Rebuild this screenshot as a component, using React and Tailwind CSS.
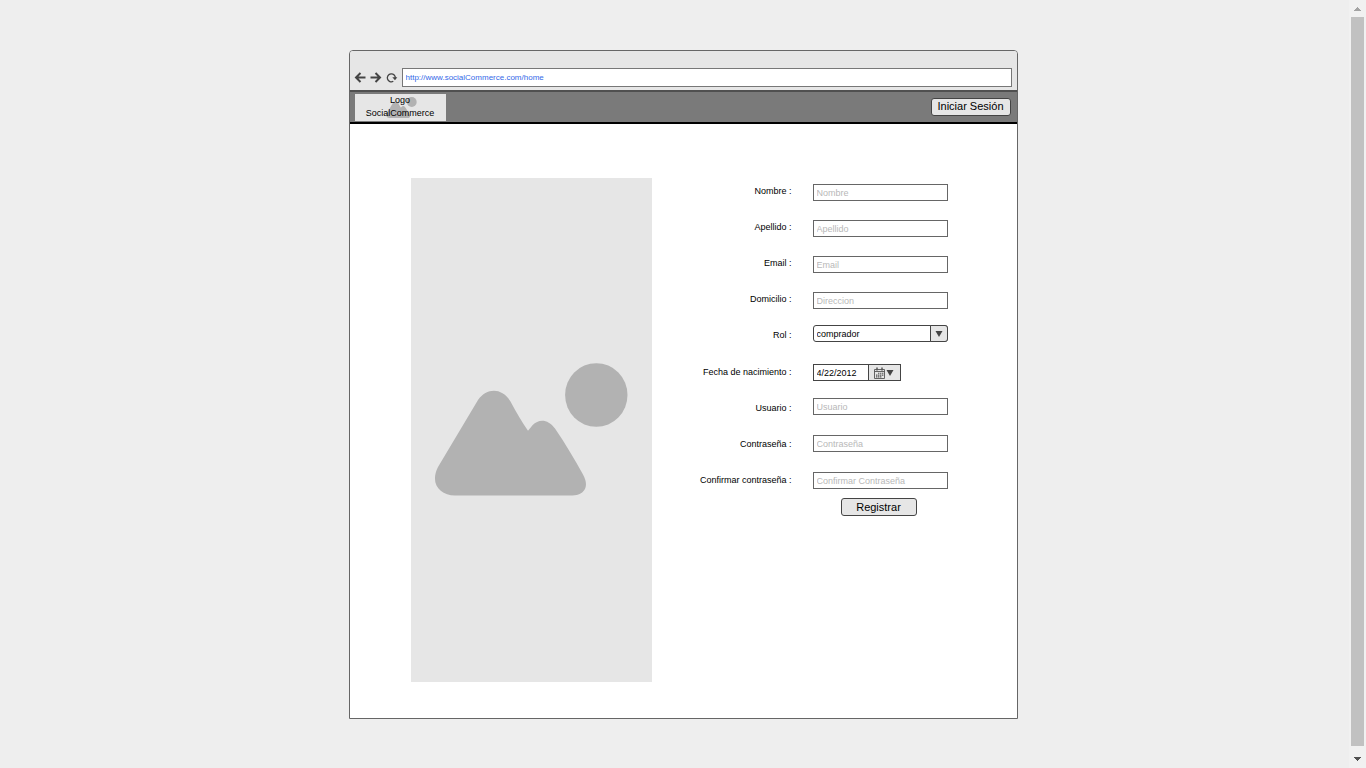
import React from "react";

const FIELDS_TOP = [
  { id: "nombre", placeholder: "Nombre" },
  { id: "apellido", placeholder: "Apellido" },
  { id: "email", placeholder: "Email" },
  { id: "domicilio", placeholder: "Direccion" },
];

const FIELDS_BOTTOM = [
  { id: "usuario", placeholder: "Usuario" },
  { id: "contrasena", placeholder: "Contraseña", type: "password" },
  { id: "confirmar", placeholder: "Confirmar Contraseña", type: "password" },
];

const LABELS_TOP = [
  ["nombre", "Nombre :"],
  ["apellido", "Apellido :"],
  ["email", "Email :"],
  ["domicilio", "Domicilio :"],
  ["rol", "Rol :"],
];

const LABELS_BOTTOM = [
  ["fecha", "Fecha de nacimiento :"],
  ["usuario", "Usuario :"],
  ["contrasena", "Contraseña :"],
  ["confirmar", "Confirmar contraseña :"],
];

function Landscape() {
  return (
    <g fill="#b2b2b2">
      <path d="M67 222C76 209.500 91 209.500 99.500 223.500C105 234 111 244 117 252.700L121.500 247.200C128 240.500 137 241 144 250.500C154 265 163 280.500 172 296.500C179 309 173 317.500 161 317.500H44C29 317 18.500 306 27 289Z" />
      <ellipse cx="185.300" cy="217" rx="31.200" ry="31.800" />
    </g>
  );
}

function TextField({ id, placeholder, type = "text" }) {
  return (
    <input
      id={id}
      type={type}
      placeholder={placeholder}
      className="block h-[17px] w-full border border-[#666] bg-white px-[3px] text-[9px] leading-3 text-black outline-none placeholder:text-[#b8b8b8]"
    />
  );
}

function LabelGroup({ labels }) {
  return (
    <div className="flex flex-col gap-6">
      {labels.map(([id, text]) => (
        <label key={id} htmlFor={id} className="whitespace-nowrap">
          {text}
        </label>
      ))}
    </div>
  );
}

function BrowserBar() {
  return (
    <div className="flex h-[39px] items-end gap-1 bg-[#e6e6e6] pr-[5px] pb-[3px] pl-1">
      <div className="flex h-[19px] items-center gap-1">
        <button type="button" aria-label="Atrás" className="h-3 w-3">
          <svg viewBox="0 0 12 12" className="h-3 w-3" fill="none" stroke="#444" strokeWidth="2">
            <path d="M11.500 5.500H2.500M6.500 1L2 5.500L6.500 10" />
          </svg>
        </button>
        <button type="button" aria-label="Adelante" className="h-3 w-3">
          <svg viewBox="0 0 12 12" className="h-3 w-3" fill="none" stroke="#444" strokeWidth="2">
            <path d="M0.500 5.500H9.500M5.500 1L10 5.500L5.500 10" />
          </svg>
        </button>
        <button type="button" aria-label="Recargar" className="h-3 w-3">
          <svg viewBox="0 0 12 12" className="h-3 w-3" fill="none" stroke="#444" strokeWidth="1.300">
            <path d="M7.300 9.300A4 4 0 1 1 9.300 6.300" />
            <path d="M6.300 5.300H11.300L9 8.300Z" fill="#444" stroke="none" />
          </svg>
        </button>
      </div>
      <input
        type="url"
        aria-label="Dirección"
        defaultValue="http://www.socialCommerce.com/home"
        className="h-[19px] min-w-0 flex-1 border border-[#777] bg-white px-[3px] text-[8px] leading-3 text-[#3369e8] outline-none"
      />
    </div>
  );
}

function SiteHeader() {
  return (
    <header className="flex h-[34px] items-start justify-between border-t-2 border-b-2 border-t-[#505050] border-b-black bg-[#7a7a7a] pt-[2px] pr-[6px] pl-[5px]">
      <a href="#home" className="relative flex h-[27px] w-[91px] flex-col items-center bg-[#e6e6e6] text-[9px] leading-[13px] text-black">
        <svg viewBox="24 185 193 133" className="absolute top-[3px] left-[31px] h-[21px] w-[31px]" aria-hidden="true">
          <Landscape />
        </svg>
        <span className="relative">Logo</span>
        <span className="relative">SocialCommerce</span>
      </a>
      <button type="button" className="mt-1 h-[18px] w-20 rounded-[3px] border border-[#444] bg-[#e6e6e6] pb-[2px] text-[11px] leading-[14px] text-black">
        Iniciar Sesión
      </button>
    </header>
  );
}

function RegisterForm() {
  return (
    <form className="flex gap-[21px] pt-[6px]" onSubmit={(e) => e.preventDefault()}>
      <div className="flex w-[101px] flex-col gap-[25px] pt-px text-right text-[9px] leading-3 text-black">
        <LabelGroup labels={LABELS_TOP} />
        <LabelGroup labels={LABELS_BOTTOM} />
      </div>
      <div className="flex w-[135px] flex-col">
        <div className="flex flex-col gap-[19px]">
          {FIELDS_TOP.map((f) => (
            <TextField key={f.id} {...f} />
          ))}
        </div>
        <div className="relative mt-4">
          <select
            id="rol"
            defaultValue="comprador"
            className="block h-[17px] w-full appearance-none rounded-[3px] border border-[#444] bg-white pr-5 pl-[3px] text-[9px] leading-3 text-black outline-none"
          >
            <option>comprador</option>
            <option>vendedor</option>
          </select>
          <span className="pointer-events-none absolute top-0 right-0 flex h-[17px] w-[18px] items-center justify-center rounded-r-[3px] border border-[#444] bg-[#e6e6e6]">
            <svg viewBox="0 0 8 6" className="h-[6px] w-2" fill="#444">
              <path d="M0.500 0H7.500L4 6Z" />
            </svg>
          </span>
        </div>
        <div className="mt-[22px] flex h-[17px] w-[88px] border border-[#444]">
          <input
            id="fecha"
            type="text"
            defaultValue="4/22/2012"
            className="w-[54px] bg-white px-[3px] text-[9px] leading-3 text-black outline-none"
          />
          <button type="button" aria-label="Abrir calendario" className="flex flex-1 items-center justify-center gap-px border-l border-[#444] bg-[#e6e6e6]">
            <svg viewBox="0 0 11 12" className="h-3 w-[11px]" fill="none" stroke="#555">
              <path d="M0.500 2.500H10.500V11.500H0.500ZM0.500 4.500H10.500" strokeWidth="0.900" />
              <path d="M3 0.500V3.500M8 0.500V3.500" strokeWidth="1.500" />
              <path d="M4 6.300H9.500M2 8.100H9.500M2 9.900H7.500" strokeWidth="1.100" strokeDasharray="1.400 0.600" />
            </svg>
            <svg viewBox="0 0 8 6" className="h-[6px] w-2" fill="#444">
              <path d="M0.500 0H7.500L4 6Z" />
            </svg>
          </button>
        </div>
        <div className="mt-[17px] flex flex-col gap-5">
          {FIELDS_BOTTOM.map((f) => (
            <TextField key={f.id} {...f} />
          ))}
        </div>
        <button type="submit" className="mt-[9px] ml-7 h-[18px] w-[76px] rounded-[3px] border border-[#444] bg-[#e6e6e6] pb-px text-[11px] leading-[14px] text-black">
          Registrar
        </button>
      </div>
    </form>
  );
}

function PageScroll() {
  return (
    <div className="flex w-[17px] shrink-0 flex-col items-center bg-[#f1f1f1]" aria-hidden="true">
      <div className="flex h-[17px] items-center">
        <svg viewBox="0 0 7 4" className="h-1 w-[7px]" fill="#a3a3a3">
          <path d="M3 0H4V1H5V2H6V3H7V4H0V3H1V2H2V1H3Z" />
        </svg>
      </div>
      <div className="w-[13px] flex-1 bg-[#c1c1c1]" />
      <div className="flex h-[22px] items-center pt-1">
        <svg viewBox="0 0 7 4" className="h-1 w-[7px]" fill="#505050">
          <path d="M0 0H7V1H6V2H5V3H4V4H3V3H2V2H1V1H0Z" />
        </svg>
      </div>
    </div>
  );
}

export default function App() {
  return (
    <div className="flex min-h-screen bg-[#eee] font-['Liberation_Sans',Arial,sans-serif]">
      <main className="flex flex-1 justify-center pt-[50px] pb-[49px] pl-[17px]">
        <div className="flex w-full max-w-[669px] flex-col overflow-hidden rounded-t-[4px] border border-[#666] bg-white">
          <BrowserBar />
          <SiteHeader />
          <div className="flex gap-[39px] pt-[54px] pr-[69px] pb-9 pl-[61px]">
            <svg viewBox="0 0 241 504" className="h-[504px] w-[241px] shrink-0 bg-[#e6e6e6]" role="img" aria-label="Imagen">
              <Landscape />
            </svg>
            <RegisterForm />
          </div>
        </div>
      </main>
      <PageScroll />
    </div>
  );
}
